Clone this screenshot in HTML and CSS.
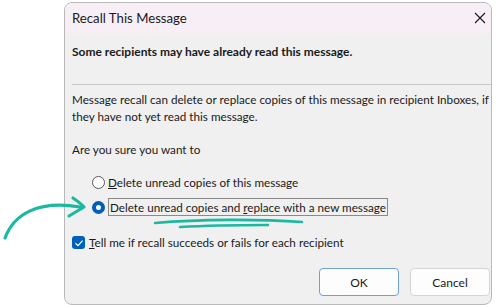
FILE: index.html
```html
<!DOCTYPE html>
<html>
<head>
<meta charset="utf-8">
<link rel="stylesheet" href="styles.css">
</head>
<body>
<div class="stage">
  <div class="dialog">
    <div class="titlebar">
      <span class="title">Recall This Message</span>
      <span class="close">
        <svg width="12" height="12" viewBox="0 0 12 12"><path d="M1 1 L11 11 M11 1 L1 11" stroke="#1a1a1a" stroke-width="1.1" fill="none"/></svg>
      </span>
    </div>
    <div class="content">
      <p class="warn">Some recipients may have already read this message.</p>
      <div class="sep"></div>
      <p class="para">Message recall can delete or replace copies of this message in recipient Inboxes, if they have not yet read this message.</p>
      <p class="ask">Are you sure you want to</p>
      <div class="options">
        <div class="opt"><span class="radio"></span><span class="lbl"><u>D</u>elete unread copies of this message</span></div>
        <div class="opt"><span class="radio on"></span><span class="lbl focus">Delete unread copies and <u>r</u>eplace with a new message</span></div>
      </div>
      <div class="check">
        <span class="box"><svg width="10" height="10" viewBox="0 0 10 10"><path d="M1.5 5.2 L4 7.6 L8.6 2.6" stroke="#fff" stroke-width="1.2" fill="none"/></svg></span>
        <span class="lbl"><u>T</u>ell me if recall succeeds or fails for each recipient</span>
      </div>
      <div class="buttons">
        <button class="btn primary">OK</button>
        <button class="btn">Cancel</button>
      </div>
    </div>
  </div>
  <svg class="annot" width="500" height="305" viewBox="0 0 500 305">
    <path d="M5 238 C 14 214, 38 200, 80 207" stroke="#1ab9a0" stroke-width="3.2" fill="none" stroke-linecap="round"/>
    <path d="M73 198 C 78 201, 81 204, 84 207 C 79 210, 74 213, 69 216" stroke="#1ab9a0" stroke-width="3.2" fill="none" stroke-linecap="round" stroke-linejoin="round"/>
    <path d="M155 223 C 200 219, 260 219, 302 222 M 180 227 C 215 225, 245 225, 268 225" stroke="#1ab9a0" stroke-width="2.6" fill="none" stroke-linecap="round"/>
  </svg>
</div>
</body>
</html>
```
FILE: styles.css
```css
* { box-sizing: border-box; }
html, body { margin: 0; padding: 0; background: #fff; }
body { font-family: "Lato", "Noto Sans", sans-serif; color: #1a1a1a; }
.stage { position: relative; width: 500px; height: 305px; padding: 2px 8px 0 64px; overflow: hidden; }
.dialog {
  width: 428px; height: 303px;
  border: 1px solid #b9b9b9;
  border-radius: 8px;
  background: #f0f0f0;
  overflow: hidden;
  display: flex; flex-direction: column;
}
.titlebar {
  height: 30px; flex: none;
  background: #f8eff6;
  display: flex; align-items: center; justify-content: space-between;
  padding: 0 5px 0 7px;
}
.title { font-size: 13.2px; color: #1a1a1a; }
.close { width: 12px; height: 12px; display: flex; }
.content { padding: 0 0 0 7px; display: flex; flex-direction: column; flex: 1; }
p { margin: 0; }
.warn { font-size: 12px; font-weight: bold; margin-top: 10px; line-height: 17px; }
.sep { height: 1px; background: #c9c9c9; margin-top: 24px; }
.para { font-size: 11.7px; line-height: 17px; margin-top: 6px; }
.ask { font-size: 11.7px; line-height: 17px; margin-top: 16px; }
.options { display: flex; flex-direction: column; gap: 7px; margin-top: 15px; padding-left: 20px; }
.opt { display: flex; align-items: center; gap: 3px; height: 18px; font-size: 11.7px; }
.radio { width: 13px; height: 13px; border-radius: 50%; border: 1px solid #5a5a5a; background: #fff; flex: none; }
.radio.on { border: 4px solid #005fb8; background: #fff; }
.lbl.focus { border: 1px solid #8a8a8a; padding: 0 1px; line-height: 16px; }
.check { display: flex; align-items: center; gap: 4px; margin-top: 18px; font-size: 11.7px; line-height: 17px; }
.box { width: 13px; height: 13px; border-radius: 3px; background: #005fb8; display: flex; align-items: center; justify-content: center; flex: none; }
.buttons { display: flex; justify-content: flex-end; gap: 11px; margin-top: 17px; padding-right: 1px; }
.btn {
  width: 80px; height: 28px;
  font-family: inherit; font-size: 12px; color: #1a1a1a;
  background: #fdfdfd; border: 1px solid #d4d4d4; border-radius: 4px;
}
.btn.primary { border: 1px solid #6fa0d6; }
.annot { position: absolute; left: 0; top: 0; pointer-events: none; }
```
